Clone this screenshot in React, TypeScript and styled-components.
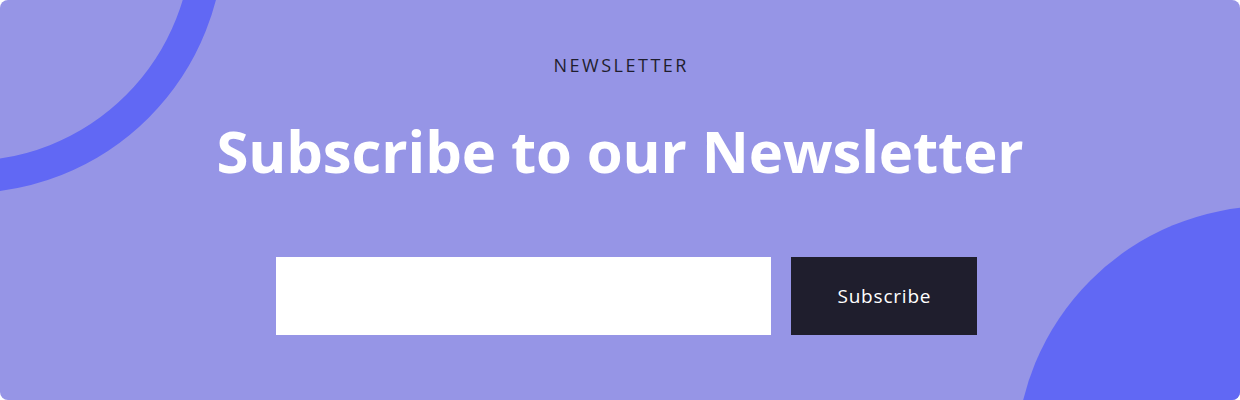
import React from "react";
import styled, { createGlobalStyle } from "styled-components";

const GlobalStyle = createGlobalStyle`
  html, body {
    margin: 0;
    padding: 0;
    background: #ffffff;
  }
  * { box-sizing: border-box; }
`;

const Card = styled.section`
  position: relative;
  width: 1240px;
  height: 400px;
  border-radius: 8px;
  overflow: hidden;
  background: #9695e6;
  font-family: "Open Sans", Lato, sans-serif;
  display: flex;
  flex-direction: column;
  align-items: center;
  padding-top: 53px;
`;

const Ring = styled.div`
  position: absolute;
  left: -290px;
  top: -321px;
  width: 514px;
  height: 514px;
  border-radius: 50%;
  border: 32px solid #6168f4;
`;

const Blob = styled.div`
  position: absolute;
  left: 1016px;
  top: 206px;
  width: 508px;
  height: 508px;
  border-radius: 50%;
  background: #6168f4;
`;

const Content = styled.div`
  position: relative;
  z-index: 1;
  display: flex;
  flex-direction: column;
  align-items: center;
  width: 100%;
`;

const Eyebrow = styled.div`
  font-size: 18px;
  line-height: 24px;
  font-weight: 500;
  letter-spacing: 2.5px;
  padding-left: 2.5px;
  color: #1f1e2e;
  text-transform: uppercase;
`;

const Heading = styled.h2`
  margin: 34px 0 0;
  font-size: 58px;
  line-height: 80px;
  font-weight: 700;
  letter-spacing: -0.1px;
  color: #ffffff;
`;

const Form = styled.form`
  display: flex;
  gap: 20px;
  margin-top: 66px;
  padding-left: 13px;
`;

const EmailInput = styled.input`
  width: 495px;
  height: 78px;
  border: none;
  outline: none;
  background: #ffffff;
  padding: 0 20px;
  font-family: inherit;
  font-size: 18px;
`;

const SubmitButton = styled.button`
  width: 186px;
  height: 78px;
  border: none;
  background: #1f1e2d;
  color: #ffffff;
  font-family: inherit;
  font-size: 19px;
  font-weight: 500;
  letter-spacing: 0.8px;
  padding: 0 0 0 0.8px;
  cursor: pointer;
`;

export default function App() {
  return (
    <>
      <GlobalStyle />
      <Card>
        <Ring />
        <Blob />
        <Content>
          <Eyebrow>Newsletter</Eyebrow>
          <Heading>Subscribe to our Newsletter</Heading>
          <Form onSubmit={(e) => e.preventDefault()}>
            <EmailInput type="email" aria-label="Email" />
            <SubmitButton type="submit">Subscribe</SubmitButton>
          </Form>
        </Content>
      </Card>
    </>
  );
}
